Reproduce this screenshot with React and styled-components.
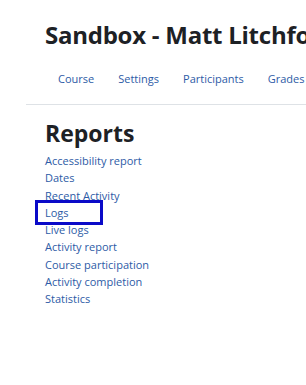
import React from "react";
import styled, { createGlobalStyle } from "styled-components";

const Global = createGlobalStyle`
  html, body { margin: 0; padding: 0; background: #fff; }
  body { font-family: "Open Sans", "Noto Sans", sans-serif; color: #1d2125; overflow: hidden; }
`;

const Page = styled.div`
  width: 306px;
  height: 385px;
  overflow: hidden;
  padding-left: 26px;
  box-sizing: border-box;
`;

const Header = styled.header`
  padding: 20px 0 0 19px;
  border-bottom: 1px solid #dee2e6;
`;

const Title = styled.h1`
  margin: 0;
  font-size: 24px;
  font-weight: 700;
  line-height: 30px;
  letter-spacing: -0.25px;
  white-space: nowrap;
`;

const Nav = styled.nav`
  display: flex;
  gap: 24px;
  padding-left: 13px;
  margin-top: 21px;
  height: 33px;
  align-items: flex-start;
`;

const NavItem = styled.a`
  font-size: 11px;
  line-height: 16px;
  color: #2d5ba6;
  white-space: nowrap;
  text-decoration: none;
`;

const Main = styled.main`
  padding: 14px 0 0 19px;
`;

const Heading = styled.h2`
  margin: 0 0 5px;
  font-size: 23px;
  font-weight: 700;
  line-height: 28px;
`;

const List = styled.ul`
  list-style: none;
  margin: 0;
  padding: 0;
  display: flex;
  flex-direction: column;
`;

const Item = styled.li`
  position: relative;
  font-size: 11px;
  line-height: 17.25px;
`;

const Link = styled.a`
  color: #2d5ba6;
  text-decoration: none;
  white-space: nowrap;
`;

const Highlight = styled.span`
  position: absolute;
  left: -10px;
  top: -4px;
  width: 68px;
  height: 25px;
  border: 3px solid #0a0ac8;
  box-sizing: border-box;
`;

const navItems = ["Course", "Settings", "Participants", "Grades"];
const reports = [
  "Accessibility report",
  "Dates",
  "Recent Activity",
  "Logs",
  "Live logs",
  "Activity report",
  "Course participation",
  "Activity completion",
  "Statistics",
];

export default function App() {
  return (
    <>
      <Global />
      <Page>
        <Header>
          <Title>Sandbox - Matt Litchford</Title>
          <Nav>
            {navItems.map((n) => (
              <NavItem key={n}>{n}</NavItem>
            ))}
          </Nav>
        </Header>
        <Main>
          <Heading>Reports</Heading>
          <List>
            {reports.map((r) => (
              <Item key={r}>
                <Link>{r}</Link>
                {r === "Logs" && <Highlight />}
              </Item>
            ))}
          </List>
        </Main>
      </Page>
    </>
  );
}
